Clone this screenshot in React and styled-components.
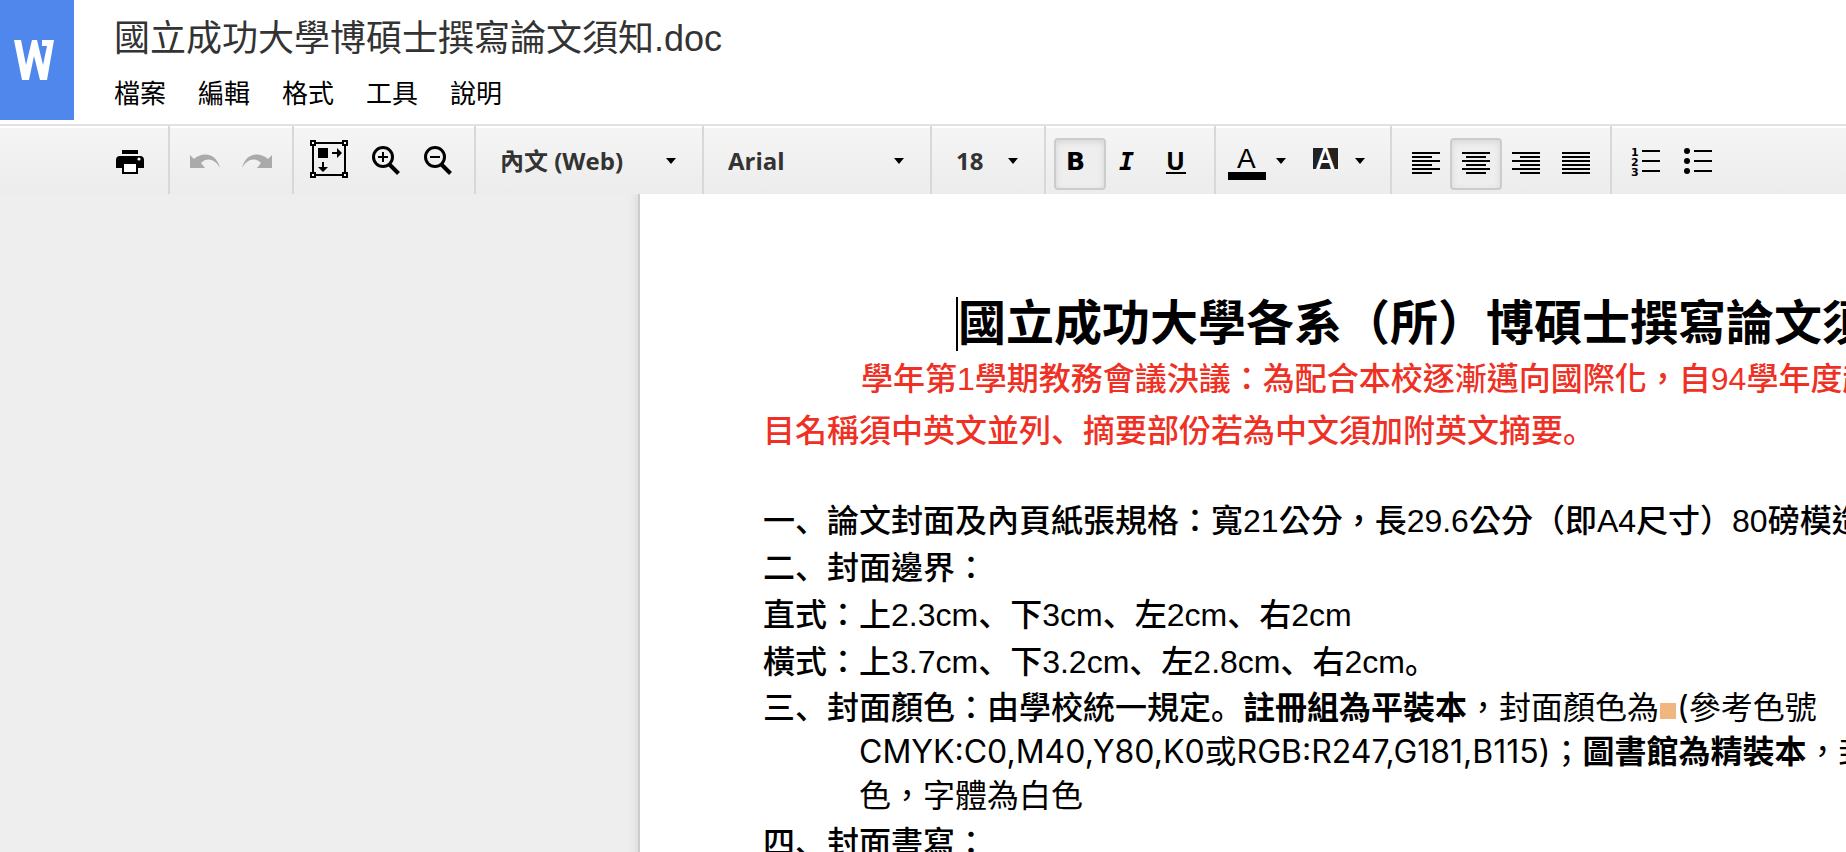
import { useState } from 'react';
import styled, { createGlobalStyle, css } from 'styled-components';

const GlobalStyle = createGlobalStyle`
    * {
        box-sizing: border-box;
    }
    body {
        margin: 0;
        background: #eeeeee;
        overflow-x: hidden;
        font-family: 'Liberation Sans', 'Noto Sans CJK TC', sans-serif;
    }
`;

const AppContainer = styled.div`
    min-height: 100vh;
    display: flex;
    flex-direction: column;
    overflow: hidden;
`;

const Header = styled.header`
    display: flex;
    gap: 40px;
    padding-bottom: 4px;
    background: #ffffff;
`;

const Logo = styled.a`
    width: 74px;
    height: 120px;
    padding-right: 6px;
    display: flex;
    justify-content: center;
    align-items: center;
    background: #4f87ed;
`;

const HeaderContent = styled.div`
    display: flex;
    flex-direction: column;
    gap: 9px;
    padding-top: 13px;
`;

const FileName = styled.h1`
    margin: 0;
    font-size: 36px;
    font-weight: normal;
    line-height: 52px;
    color: #333333;
`;

const Menu = styled.nav`
    display: flex;
    gap: 32px;
`;

const MenuButton = styled.button`
    padding: 0;
    border: none;
    background: none;
    font-family: inherit;
    font-size: 26px;
    line-height: 40px;
    color: #000000;
`;

const Toolbar = styled.div`
    display: flex;
    border-top: 2px solid #e1e1e1;
    background: linear-gradient(#ffffff 2px, #f5f5f5 2px, #ececec);
`;

const ToolGroup = styled.div`
    display: flex;
    padding: ${({ $padding }) => $padding || '12px 8px 4px'};
    border-right: ${({ $last }) => ($last ? 'none' : '2px solid #d8d8d8')};

    > * + * {
        margin-left: ${({ $joined }) => ($joined ? -2 : 0)}px;
    }
`;

const ToolButton = styled.button`
    width: ${({ $width }) => $width || 52}px;
    height: 52px;
    padding: 0;
    border: 2px solid transparent;
    border-radius: 4px;
    background: none;
    display: flex;
    align-items: center;
    color: #000000;

    &:disabled {
        color: #aaaaaa;
    }

    ${({ $active }) =>
        $active &&
        css`
            border-color: #cccccc;
            background: #eeeeee;
            box-shadow: inset 0 2px 6px rgba(0, 0, 0, 0.1);
        `}
`;

const ColorButton = styled(ToolButton)`
    width: 79px;
    gap: 2px;
`;

const SelectWrapper = styled.label`
    display: grid;
    align-items: center;
    width: ${({ $width }) => $width}px;

    > * {
        grid-area: 1 / 1;
    }

    > svg {
        justify-self: end;
        margin-right: 26px;
        pointer-events: none;
    }
`;

const Select = styled.select`
    appearance: none;
    width: 100%;
    height: 52px;
    padding: 0 0 8px 24px;
    border: none;
    background: none;
    font-family: 'Open Sans', 'Noto Sans CJK TC', sans-serif;
    font-size: 24px;
    font-weight: bold;
    color: #333333;
`;

const Workspace = styled.main`
    flex: 1;
    display: flex;
    padding-left: 640px;
    background: #eeeeee;
`;

const Page = styled.article`
    flex: none;
    width: 1596px;
    padding: 101px 123px 0;
    background: #ffffff;
    box-shadow: 0 0 0 2px #cccccc, 0 0 10px 2px rgba(0, 0, 0, 0.12);
    clip-path: inset(0 0 0 -12px);
    color: #000000;
    white-space: nowrap;
`;

const Title = styled.h2`
    margin: 0;
    display: flex;
    justify-content: center;
    align-items: center;
    font-size: 48px;
    font-weight: bold;
    line-height: 58px;
`;

const Caret = styled.span`
    width: 2px;
    height: 54px;
    margin-left: -2px;
    background: #000000;
`;

const Notice = styled.p`
    margin: 0 0 41px;
    font-size: 32px;
    font-weight: 500;
    line-height: 52px;
    text-indent: 98px;
    color: #ee3124;
`;

const Paragraph = styled.p`
    margin: 0;
    font-size: 32px;
    font-weight: 500;
    line-height: 47px;
`;

const HangingParagraph = styled(Paragraph)`
    margin-bottom: 2px;
    padding-left: 96px;
    text-indent: -96px;
    font-family: Inter, 'Noto Sans CJK TC', sans-serif;
    font-weight: normal;
    line-height: 44px;
`;

const Lead = styled.span`
    font-weight: 500;
`;

const Swatch = styled.span`
    display: inline-block;
    width: 16px;
    height: 16px;
    margin: 0 1px;
    background: #efb67f;
`;

const Mark = styled.span`
    font-family: 'Noto Sans CJK JP', sans-serif;
    line-height: 0;
`;

// enumeration comma and full stop sit in the lower left corner
const Marks = ({ children }) =>
    children
        .split(/([、。])/)
        .map((part, i) =>
            i % 2 ? (
                <Mark key={i} lang="ja">
                    {part}
                </Mark>
            ) : (
                part
            )
        );

const MENUS = ['檔案', '編輯', '格式', '工具', '說明'];

const ALIGNMENTS = [
    { name: 'left', label: '靠左對齊', width: 20, shift: 0 },
    { name: 'center', label: '置中對齊', width: 20, shift: 4 },
    { name: 'right', label: '靠右對齊', width: 20, shift: 8 },
    { name: 'justify', label: '左右對齊', width: 28, shift: 0 },
];

const Icon = ({ width = 48, children }) => (
    <svg
        width={width}
        height="48"
        viewBox={`0 0 ${width} 48`}
        fill="currentColor"
        aria-hidden="true"
    >
        {children}
    </svg>
);

const DownArrow = () => (
    <svg width="10" height="12" viewBox="0 0 10 12" aria-hidden="true">
        <path d="M0 0h10L5 6z" />
    </svg>
);

const LogoIcon = () => (
    <svg width="40" height="40" viewBox="0 0 40 40" aria-hidden="true">
        <path
            d="M0 0h7l5 25L18 0h5l6 25 4-19h-5V0h12l-7 40h-7l-6-24-5 24H8z"
            fill="#ffffff"
        />
    </svg>
);

const PrintIcon = () => (
    <Icon>
        <path d="M16 10h16v4H16z" />
        <path d="M14 16h20q4 0 4 4v8h-6v6H16v-6h-6v-8q0-4 4-4z" />
        <path d="M18 24h12v8H18z" fill="#ffffff" />
        <circle cx="33" cy="19" r="1.6" fill="#ffffff" />
    </Icon>
);

const UndoIcon = () => (
    <Icon>
        <path d="M9 15l4 4c8-7 22-7 26 9-5-9-13-11-19-5l4 5H9z" />
    </Icon>
);

const RedoIcon = () => (
    <Icon>
        <path d="M39 15l-4 4C27 12 13 12 9 28c5-9 13-11 19-5l-4 5h15z" />
    </Icon>
);

const FitIcon = () => (
    <Icon width={52}>
        <path
            d="M7 3h32v32H7z"
            fill="none"
            stroke="currentColor"
            strokeWidth="2"
        />
        <g fill="#ffffff" stroke="currentColor" strokeWidth="2">
            <path d="M5 1h4v4H5zM37 1h4v4h-4zM5 33h4v4H5zM37 33h4v4h-4z" />
        </g>
        <path d="M12 8h10v10H12zM26 12h5V8l5 5-5 5v-4h-5zM16 22h2v5h4l-5 5-5-5h4z" />
    </Icon>
);

const ZoomIcon = ({ plus }) => (
    <Icon>
        <g fill="none" stroke="currentColor">
            <circle cx="21" cy="17" r="9.5" strokeWidth="3" />
            <path d="M27 24l9.5 9.5" strokeWidth="4" />
            <path
                d={plus ? 'M16 17h10M21 12v10' : 'M16 17h10'}
                strokeWidth="2"
            />
        </g>
    </Icon>
);

const BoldIcon = () => (
    <Icon>
        <text
            x="10"
            y="30"
            fontFamily="DejaVu Sans"
            fontSize="25"
            fontWeight="bold"
        >
            B
        </text>
    </Icon>
);

const ItalicIcon = () => (
    <Icon>
        <text
            x="13"
            y="30"
            fontFamily="DejaVu Sans Mono"
            fontSize="25"
            fontWeight="bold"
            fontStyle="italic"
        >
            I
        </text>
    </Icon>
);

const UnderlineIcon = () => (
    <Icon>
        <text x="10" y="30" fontFamily="Open Sans" fontSize="25" fontWeight="700">
            U
        </text>
        <path d="M10 32h20v2H10z" />
    </Icon>
);

const TextColorIcon = () => (
    <Icon>
        <text x="11" y="28" fontFamily="Liberation Sans" fontSize="28">
            A
        </text>
        <path d="M2 32h38v8H2z" />
    </Icon>
);

const HighlightIcon = () => (
    <Icon>
        <path d="M8 8h25v21H8z" fill="#222222" />
        <text
            x="11"
            y="29"
            fontFamily="Open Sans"
            fontSize="28"
            fontWeight="600"
            fill="#ffffff"
        >
            A
        </text>
    </Icon>
);

const AlignIcon = ({ width, shift }) => (
    <Icon>
        {[12, 20, 28].map((y) => (
            <g key={y}>
                <rect x="10" y={y} width="28" height="2" />
                <rect x={10 + shift} y={y + 4} width={width} height="2" />
            </g>
        ))}
    </Icon>
);

const NumberedListIcon = () => (
    <Icon>
        {[1, 2, 3].map((n) => (
            <g key={n}>
                <text
                    x="9"
                    y={6 + n * 10}
                    fontFamily="DejaVu Sans"
                    fontSize="11"
                    fontWeight="bold"
                >
                    {n}
                </text>
                <rect x="20" y={n * 10} width="18" height="2" />
            </g>
        ))}
    </Icon>
);

const BulletListIcon = () => (
    <Icon>
        {[10, 20, 30].map((y) => (
            <g key={y}>
                <circle cx="15" cy={y + 1} r="3" />
                <rect x="22" y={y} width="18" height="2" />
            </g>
        ))}
    </Icon>
);

export default function App() {
    const [bold, setBold] = useState(true);
    const [italic, setItalic] = useState(false);
    const [underline, setUnderline] = useState(false);
    const [align, setAlign] = useState('center');

    return (
        <AppContainer>
            <GlobalStyle />
            <Header>
                <Logo href="#" aria-label="文件首頁">
                    <LogoIcon />
                </Logo>
                <HeaderContent>
                    <FileName>國立成功大學博碩士撰寫論文須知.doc</FileName>
                    <Menu>
                        {MENUS.map((name) => (
                            <MenuButton key={name}>{name}</MenuButton>
                        ))}
                    </Menu>
                </HeaderContent>
            </Header>
            <Toolbar role="toolbar">
                <ToolGroup $padding="12px 12px 4px 104px">
                    <ToolButton aria-label="列印">
                        <PrintIcon />
                    </ToolButton>
                </ToolGroup>
                <ToolGroup $padding="12px 9px 4px">
                    <ToolButton aria-label="復原" disabled>
                        <UndoIcon />
                    </ToolButton>
                    <ToolButton aria-label="重做" disabled>
                        <RedoIcon />
                    </ToolButton>
                </ToolGroup>
                <ToolGroup $padding="12px 10px 4px">
                    <ToolButton aria-label="符合視窗" $width={56}>
                        <FitIcon />
                    </ToolButton>
                    <ToolButton aria-label="放大">
                        <ZoomIcon plus />
                    </ToolButton>
                    <ToolButton aria-label="縮小">
                        <ZoomIcon />
                    </ToolButton>
                </ToolGroup>
                <ToolGroup $padding="12px 0 4px">
                    <SelectWrapper $width={226}>
                        <Select aria-label="樣式">
                            <option>內文 (Web)</option>
                        </Select>
                        <DownArrow />
                    </SelectWrapper>
                </ToolGroup>
                <ToolGroup $padding="12px 0 4px">
                    <SelectWrapper $width={226}>
                        <Select aria-label="字型">
                            <option>Arial</option>
                        </Select>
                        <DownArrow />
                    </SelectWrapper>
                </ToolGroup>
                <ToolGroup $padding="12px 0 4px">
                    <SelectWrapper $width={112}>
                        <Select aria-label="字型大小">
                            <option>18</option>
                        </Select>
                        <DownArrow />
                    </SelectWrapper>
                </ToolGroup>
                <ToolGroup $joined>
                    <ToolButton
                        $active={bold}
                        aria-label="粗體"
                        aria-pressed={bold}
                        onClick={() => setBold(!bold)}
                    >
                        <BoldIcon />
                    </ToolButton>
                    <ToolButton
                        $active={italic}
                        aria-label="斜體"
                        aria-pressed={italic}
                        onClick={() => setItalic(!italic)}
                    >
                        <ItalicIcon />
                    </ToolButton>
                    <ToolButton
                        $active={underline}
                        aria-label="底線"
                        aria-pressed={underline}
                        onClick={() => setUnderline(!underline)}
                    >
                        <UnderlineIcon />
                    </ToolButton>
                </ToolGroup>
                <ToolGroup>
                    <ColorButton aria-label="文字顏色">
                        <TextColorIcon />
                        <DownArrow />
                    </ColorButton>
                    <ColorButton aria-label="醒目提示">
                        <HighlightIcon />
                        <DownArrow />
                    </ColorButton>
                </ToolGroup>
                <ToolGroup $joined>
                    {ALIGNMENTS.map(({ name, label, width, shift }) => (
                        <ToolButton
                            key={name}
                            $active={align === name}
                            aria-label={label}
                            aria-pressed={align === name}
                            onClick={() => setAlign(name)}
                        >
                            <AlignIcon width={width} shift={shift} />
                        </ToolButton>
                    ))}
                </ToolGroup>
                <ToolGroup $joined $last>
                    <ToolButton aria-label="編號清單">
                        <NumberedListIcon />
                    </ToolButton>
                    <ToolButton aria-label="項目符號清單">
                        <BulletListIcon />
                    </ToolButton>
                </ToolGroup>
            </Toolbar>
            <Workspace>
                <Page lang="zh-Hant">
                    <Title>
                        <Caret />
                        國立成功大學各系（所）博碩士撰寫論文須知
                    </Title>
                    <Notice>
                        學年第1學期教務會議決議：為配合本校逐漸邁向國際化，自94學年度起
                        <br />
                        <Marks>
                            目名稱須中英文並列、摘要部份若為中文須加附英文摘要。
                        </Marks>
                    </Notice>
                    <Paragraph>
                        <Marks>
                            一、論文封面及內頁紙張規格：寬21公分，長29.6公分（即A4尺寸）80磅模造
                        </Marks>
                    </Paragraph>
                    <Paragraph>
                        <Marks>二、封面邊界：</Marks>
                    </Paragraph>
                    <Paragraph>
                        <Marks>直式：上2.3cm、下3cm、左2cm、右2cm</Marks>
                    </Paragraph>
                    <Paragraph>
                        <Marks>橫式：上3.7cm、下3.2cm、左2.8cm、右2cm。</Marks>
                    </Paragraph>
                    <HangingParagraph>
                        <Lead>
                            <Marks>三、封面顏色：由學校統一規定。</Marks>
                        </Lead>
                        <b>註冊組為平裝本</b>，封面顏色為
                        <Swatch />
                        (參考色號
                        <br />
                        CMYK:C0,M40,Y80,K0或RGB:R247,G181,B115)；
                        <b>圖書館為精裝本</b>，封
                        <br />
                        色，字體為白色
                    </HangingParagraph>
                    <Paragraph>
                        <Marks>四、封面書寫：</Marks>
                    </Paragraph>
                </Page>
            </Workspace>
        </AppContainer>
    );
}
